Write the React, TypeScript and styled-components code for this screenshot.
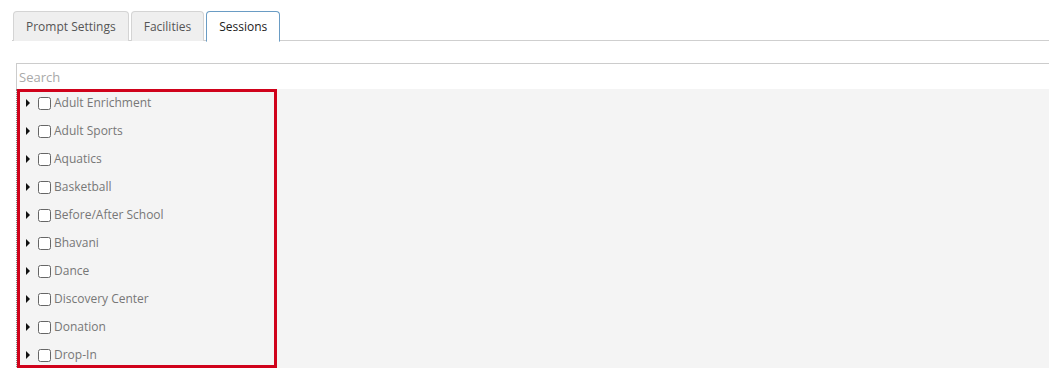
import React from "react";
import styled, { createGlobalStyle } from "styled-components";

const Global = createGlobalStyle`
  html, body { margin: 0; padding: 0; background: #fff; }
  body { font-family: "Open Sans", "Liberation Sans", sans-serif; }
  * { box-sizing: border-box; }
`;

const Page = styled.div`
  width: 1049px;
  height: 368px;
  overflow: hidden;
  padding: 11px 0 0 12px;
`;

const TabBar = styled.div`
  display: flex;
  gap: 2px;
  padding-left: 1px;
  border-bottom: 1px solid #cfcfcf;
  height: 30px;
`;

const Tab = styled.div<{ $active?: boolean }>`
  padding: 0 12px;
  display: flex;
  align-items: center;
  font-size: 12px;
  color: ${(p) => (p.$active ? "#222" : "#555")};
  background: ${(p) => (p.$active ? "#fff" : "#efefef")};
  border: 1px solid ${(p) => (p.$active ? "#6a9cc4" : "#d4d4d4")};
  border-bottom: ${(p) => (p.$active ? "1px solid #fff" : "none")};
  border-radius: 4px 4px 0 0;
  margin-bottom: ${(p) => (p.$active ? "-1px" : "0")};
  height: ${(p) => (p.$active ? "31px" : "30px")};
`;

const Content = styled.div`
  padding: 22px 0 0 4px;
`;

const SearchInput = styled.input`
  display: block;
  width: 1040px;
  height: 28px;
  border: 1px solid #cccccc;
  padding: 0 2px;
  font-family: "Open Sans", "Liberation Sans", sans-serif;
  font-size: 13px;
  color: #555;
  outline: none;
  &::placeholder { color: #a9a9a9; }
`;

const Panel = styled.div`
  background: #f4f4f4;
  border-left: 1px dotted #888;
  height: 300px;
  width: 1040px;
`;

const Tree = styled.ul`
  list-style: none;
  margin: -2px 0 0 0;
  padding: 0 0 0 6px;
  width: 260px;
  height: 279px;
  border: 3px solid #d0021b;
  display: flex;
  flex-direction: column;
  gap: 7px;
`;

const Row = styled.li`
  height: 21px;
  display: flex;
  align-items: center;
  padding-top: 1px;
`;

const Caret = styled.span`
  width: 0;
  height: 0;
  border-top: 4px solid transparent;
  border-bottom: 4px solid transparent;
  border-left: 4px solid #111;
  margin-right: 8px;
`;

const Box = styled.span`
  width: 13px;
  height: 13px;
  border: 1px solid #666;
  border-radius: 2.5px;
  background: #fff;
  margin-right: 3px;
`;

const Label = styled.span`
  font-size: 12px;
  color: #777;
  line-height: 1;
  margin-top: -1px;
`;

const items = [
  "Adult Enrichment",
  "Adult Sports",
  "Aquatics",
  "Basketball",
  "Before/After School",
  "Bhavani",
  "Dance",
  "Discovery Center",
  "Donation",
  "Drop-In",
];

export default function App() {
  return (
    <>
      <Global />
      <Page>
        <TabBar>
          <Tab>Prompt Settings</Tab>
          <Tab>Facilities</Tab>
          <Tab $active>Sessions</Tab>
        </TabBar>
        <Content>
          <SearchInput placeholder="Search" />
          <Panel>
            <Tree>
              {items.map((it) => (
                <Row key={it}>
                  <Caret />
                  <Box />
                  <Label>{it}</Label>
                </Row>
              ))}
            </Tree>
          </Panel>
        </Content>
      </Page>
    </>
  );
}
